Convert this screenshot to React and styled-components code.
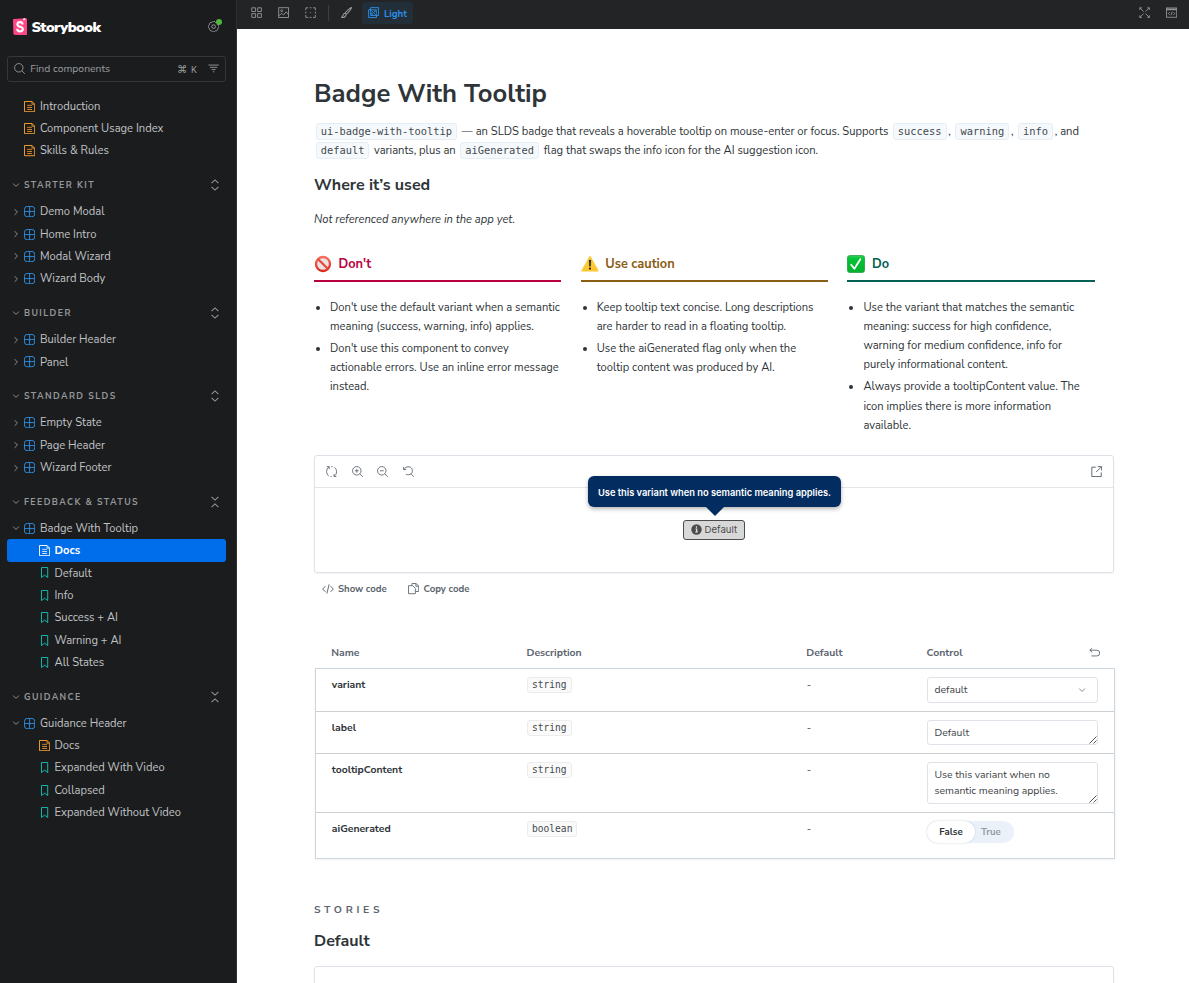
import React from 'react';
import styled, { createGlobalStyle } from 'styled-components';

const SANS = "'Nunito Sans', 'Open Sans', sans-serif";
const MONO = "Menlo, 'DejaVu Sans Mono', monospace";
const UI = "Inter, 'Liberation Sans', sans-serif";

const GlobalStyle = createGlobalStyle`
  *, *::before, *::after { box-sizing: border-box; }
  body {
    margin: 0;
    overflow: hidden;
    font-family: ${SANS};
    font-size: 11.2px;
    color: #2e3438;
    background: #fff;
    -webkit-font-smoothing: antialiased;
  }
  svg { display: block; flex: none; }
`;

/* ---------- icons, all on a 14 unit grid ---------- */

const Svg = ({ size = 11.2, sw = 1.1, children }) => (
  <svg
    width={size}
    height={size}
    viewBox="0 0 14 14"
    fill="none"
    stroke="currentColor"
    strokeWidth={sw}
  >
    {children}
  </svg>
);

const DocumentIcon = () => (
  <Svg sw={1.2}>
    <path d="M4 5.4h6M4 8.1h6M4 10.6h6" strokeWidth="1" />
    <path d="M.6 .6h9.4l3.4 3.4v9.4H.6z" strokeLinejoin="round" />
    <path d="M10 .6v3.4h3.4" strokeWidth="1" />
  </Svg>
);

const ComponentIcon = () => (
  <Svg>
    <rect x=".6" y=".6" width="12.8" height="12.8" rx="3.4" />
    <path d="M7 .6v12.8M.6 7h12.8" />
  </Svg>
);

const BookmarkIcon = () => (
  <Svg sw={1.2}>
    <path d="M3.1 .6h7.8v12.6L7 10.2l-3.9 3z" strokeLinejoin="round" />
  </Svg>
);

const ChevronIcon = ({ open }) => (
  <Svg size={8} sw={1.6}>
    <path d={open ? 'M2 4.5l5 5 5-5' : 'M4.5 2l5 5-5 5'} />
  </Svg>
);

const ExpandAllIcon = () => (
  <Svg size={12} sw={1.2}>
    <path d="M3 4.8L7 1l4 3.8M3 9.2L7 13l4-3.8" />
  </Svg>
);

const CollapseAllIcon = () => (
  <Svg size={12} sw={1.2}>
    <path d="M3 1l4 3.8L11 1M3 13l4-3.8 4 3.8" />
  </Svg>
);

const SearchIcon = () => (
  <Svg>
    <circle cx="6" cy="6" r="5.3" />
    <path d="M9.8 9.8l3.8 3.8" />
  </Svg>
);

const FilterIcon = () => (
  <Svg>
    <path d="M.5 2.6h13M2.5 5.4h9M4.5 8.2h5M6.1 11h1.8" />
  </Svg>
);

const CogIcon = () => (
  <Svg sw={1.2}>
    <circle cx="7" cy="7" r="2.3" />
    <path d="M12.2 4.8a2.4 2.4 0 010 4.4 2.4 2.4 0 01-3 3 2.4 2.4 0 01-4.4 0 2.4 2.4 0 01-3-3 2.4 2.4 0 010-4.4 2.4 2.4 0 013-3 2.4 2.4 0 014.4 0 2.4 2.4 0 013 3z" />
  </Svg>
);

const GridIcon = () => (
  <Svg>
    <path d="M1 1h4.7v4.7H1zM8.3 1H13v4.7H8.3zM1 8.3h4.7V13H1zM8.3 8.3H13V13H8.3z" />
  </Svg>
);

const PhotoIcon = () => (
  <Svg>
    <rect x=".9" y=".9" width="12.2" height="12.2" />
    <circle cx="4.6" cy="4.6" r="1.2" />
    <path d="M1 11l3.5-3L7 10l3-4 3 3.5" />
  </Svg>
);

const OutlineIcon = () => (
  <Svg>
    <path d="M1 4V1h3M10 1h3v3M13 10v3h-3M4 13H1v-3" />
    <path d="M5.8 1h2.4M5.8 13h2.4M1 5.8v2.4M13 5.8v2.4M6.4 7h1.2" />
  </Svg>
);

const BrushIcon = () => (
  <Svg sw={1.3}>
    <path d="M13.2 .8c-1.3 0-6.5 4.3-8.2 7l1.4 1.4C9.1 7.4 13.2 2.1 13.2 .8z" />
    <path d="M5 7.8c-2 .2-2.3 1.5-2.6 3L.8 13.2c2.6 .2 5.3-.6 5.6-4" />
  </Svg>
);

const ThemeIcon = () => (
  <Svg sw={1.2}>
    <path d="M3.4 .8h9.8v9.8H3.4z" />
    <path d="M3.4 3.4H.8v9.8h9.8v-2.6" />
    <path
      d="M3.4 3.4h7.2v7.2M3.6 7l3.6 3.5M3.6 3.6l6.8 6.8M7 3.6l3.5 3.5M10.2 3.7l-6.6 6.6"
      strokeWidth=".9"
    />
  </Svg>
);

const FullscreenIcon = () => (
  <Svg>
    <path d="M1 3.6V1h2.6M10.4 1H13v2.6M13 10.4V13h-2.6M3.6 13H1v-2.6" />
    <path d="M1 1l4.8 4.8M13 1L8.2 5.8M1 13l4.8-4.8M13 13L8.2 8.2" />
  </Svg>
);

const EditorIcon = () => (
  <Svg>
    <rect x=".6" y="1.2" width="12.8" height="11.6" />
    <path d="M.6 3h12.8" strokeWidth="2" />
    <path d="M4.6 6.5L3 8.2l1.6 1.7M9.4 6.5L11 8.2 9.4 9.9M7.7 6l-1.4 4.3" />
  </Svg>
);

const SyncIcon = () => (
  <Svg>
    <path d="M1 .9h3v3M4 .9C-.2 3.7-.2 9.9 3.5 12.5M13 13.1h-3v-3M10 13.1c4.2-2.8 4.2-9 .5-11.6M5.8 13.3h1.5M6.7 .7h1.5" />
  </Svg>
);

const ZoomInIcon = () => (
  <Svg>
    <circle cx="6" cy="6" r="5.3" />
    <path d="M9.8 9.8l3.8 3.8M6 3.6v4.8M3.6 6h4.8" />
  </Svg>
);

const ZoomOutIcon = () => (
  <Svg>
    <circle cx="6" cy="6" r="5.3" />
    <path d="M9.8 9.8l3.8 3.8M3.6 6h4.8" />
  </Svg>
);

const ZoomResetIcon = () => (
  <Svg>
    <path d="M.8 1.2v3.2H4M1.3 4.2C3.5 .3 9-.3 11.2 3.5c2.3 4.7-2.5 9.3-7.7 6.8M10 9.8l3.7 3.8" />
  </Svg>
);

const ShareIcon = () => (
  <Svg sw={1.2}>
    <path d="M6 1.5H1v11.7h11.8V8M8.5 .8h4.8v4.8M13 1L6.5 7.5" />
  </Svg>
);

const MarkupIcon = () => (
  <Svg size={12}>
    <path d="M4 3.6L.8 7 4 10.4M10 3.6L13.2 7 10 10.4M8.3 1.6L5.7 12.4" />
  </Svg>
);

const CopyIcon = () => (
  <Svg>
    <path d="M5 3.2V.6h5.2l3.2 3.2v6.8H9.4M9.9 .6v3.5h3.5" />
    <path d="M.6 3.4h5.4l3.2 3.2v6.8H.6z" />
  </Svg>
);

const UndoIcon = () => (
  <Svg>
    <path d="M4 1.5L1 4l3 2.5M1 4h8.8a3.4 3.4 0 010 7.2H3" />
  </Svg>
);

const StorybookLogo = () => (
  <svg width="14" height="17.5" viewBox="0 0 28 35">
    <path
      d="M1.2 2.1L26.5 .4c.8 0 1.5 .6 1.5 1.5v31.2c0 1-.7 1.7-1.7 1.6L2.5 33.7c-.9 0-1.5-.7-1.6-1.5L0 3.8c0-.9 .4-1.6 1.2-1.7z"
      fill="#ff4785"
    />
    <path d="M20.5 .8l3.8-.3 .2 4.5-1.9-1.3-2.3 1.2z" fill="#fff" />
    <path
      d="M19 13c0-3.4-1.9-4.7-4.8-4.7-3.4 0-5.3 1.7-5.3 4.5 0 6 10.7 3.3 10.7 9.3 0 3-2.2 4.7-5.5 4.7-3.7 0-5.6-1.8-5.4-5.4"
      fill="none"
      stroke="#fff"
      strokeWidth="4.4"
    />
  </svg>
);

const ProhibitedSign = () => (
  <svg width="18" height="18" viewBox="0 0 18 18">
    <defs>
      <linearGradient id="ban" x1="0" y1="0" x2="0" y2="1">
        <stop offset="0" stopColor="#f9705c" />
        <stop offset="1" stopColor="#d92a1c" />
      </linearGradient>
    </defs>
    <circle cx="9" cy="9" r="7" fill="#e9e4e4" stroke="url(#ban)" strokeWidth="2.3" />
    <path d="M4.2 4.2l9.6 9.6" stroke="#e8493a" strokeWidth="2.3" />
  </svg>
);

const WarningSign = () => (
  <svg width="18" height="18" viewBox="0 0 18 18">
    <defs>
      <linearGradient id="warn" x1="0" y1="0" x2="0" y2="1">
        <stop offset="0" stopColor="#ffe04d" />
        <stop offset="1" stopColor="#fcc02c" />
      </linearGradient>
    </defs>
    <path
      d="M9 1.5l8 14.4H1z"
      fill="url(#warn)"
      stroke="#fdc938"
      strokeWidth="1.4"
      strokeLinejoin="round"
    />
    <path d="M8.1 5h1.8l-.3 6.2H8.4z" fill="#2b2410" stroke="#2b2410" strokeWidth=".4" />
    <circle cx="9" cy="13.6" r="1.1" fill="#2b2410" />
  </svg>
);

const CheckSign = () => (
  <svg width="18" height="18" viewBox="0 0 18 18">
    <defs>
      <linearGradient id="check" x1="0" y1="0" x2="0" y2="1">
        <stop offset="0" stopColor="#35cf57" />
        <stop offset=".2" stopColor="#03c335" />
        <stop offset="1" stopColor="#04b12f" />
      </linearGradient>
    </defs>
    <rect
      x=".4"
      y=".4"
      width="17.2"
      height="17.2"
      rx="2.8"
      fill="url(#check)"
      stroke="#219b3f"
      strokeWidth=".8"
    />
    <path
      d="M4.2 9.7l3.2 4L13.3 4.3"
      fill="none"
      stroke="#fff"
      strokeWidth="1.8"
      strokeLinecap="round"
      strokeLinejoin="round"
    />
  </svg>
);

const InfoIcon = () => (
  <svg width="11" height="11" viewBox="0 0 11 11">
    <circle cx="5.5" cy="5.5" r="5.2" fill="#4c4c4c" />
    <path
      d="M5.5 2.2v1.5M4.5 5h1.2v2.7M4.2 8h2.7"
      stroke="#e8e8e8"
      strokeWidth="1.2"
      fill="none"
    />
  </svg>
);

/* ---------- sidebar ---------- */

const Layout = styled.div`
  display: flex;
  width: 1189px;
  height: 983px;
  overflow: hidden;
`;

const Sidebar = styled.nav`
  flex: none;
  width: 237px;
  background: #1b1c1d;
  border-right: 1px solid #2f3032;
  color: #c0c3c6;
`;

const Brand = styled.header`
  display: flex;
  align-items: center;
  height: 56px;
  padding: 0 17px 3px 13px;
  gap: 4.5px;
  color: #fff;
  font-size: 14.6px;
  font-weight: 900;
  letter-spacing: -0.57px;
`;

const BrandName = styled.span`
  flex: 1;
`;

const Settings = styled.span`
  position: relative;
  color: #96999c;
`;

const StatusDot = styled.i`
  position: absolute;
  top: -2px;
  right: -3px;
  width: 6px;
  height: 6px;
  border-radius: 50%;
  background: #4fb83d;
`;

const SearchBox = styled.div`
  display: flex;
  align-items: center;
  width: 219px;
  height: 26px;
  margin: 0 0 12.8px 7px;
  padding: 0 6px;
  border: 1px solid #363739;
  border-radius: 3px;
  color: #9a9da0;
`;

const SearchText = styled.span`
  flex: 1;
  margin: -1px 0 0 5px;
  font-size: 10.4px;
`;

const Shortcut = styled.span`
  display: flex;
  align-items: center;
  gap: 3.5px;
  margin-right: 11px;
  font-family: 'DejaVu Sans', sans-serif;
  font-size: 10.4px;
`;

const ShortcutKey = styled.kbd`
  font-family: ${UI};
  font-size: 8.8px;
`;

const SectionHead = styled.div`
  display: flex;
  align-items: center;
  height: 38.5px;
  padding: 8.3px 15px 0 12px;
  color: #95989b;
`;

const SectionTitle = styled.span`
  flex: 1;
  margin-left: 4px;
  font-size: 8.8px;
  font-weight: 700;
  letter-spacing: 1.41px;
  text-transform: uppercase;
`;

const Item = styled.div`
  display: flex;
  align-items: center;
  height: 22.35px;
  width: 219px;
  margin-left: 7px;
  padding: 0.6px 0 0 ${({ $depth }) => ($depth === 2 ? 32 : 5)}px;
  border-radius: 3px;
  background: ${({ $active }) => ($active ? '#006deb' : 'transparent')};
  color: ${({ $active }) => ($active ? '#fff' : 'inherit')};
  font-weight: ${({ $active }) => ($active ? 700 : 400)};
`;

const Caret = styled.span`
  width: 12px;
  color: #95989b;
`;

const iconColors = { document: '#fca130', component: '#2f96f3', story: '#14bdb4' };

const ItemIcon = styled.span`
  margin-right: ${({ $depth }) => ($depth === 2 ? 4.3 : 4.8)}px;
  color: ${({ $kind, $active }) => ($active ? '#fff' : iconColors[$kind])};
`;

const kinds = {
  document: DocumentIcon,
  component: ComponentIcon,
  story: BookmarkIcon,
};

const TreeItem = ({ name, kind, depth = 1, open, active }) => {
  const Icon = kinds[kind];
  return (
    <Item $depth={depth} $active={active}>
      {depth === 1 && <Caret>{kind === 'component' && <ChevronIcon open={open} />}</Caret>}
      <ItemIcon $kind={kind} $depth={depth} $active={active}>
        <Icon />
      </ItemIcon>
      {name}
    </Item>
  );
};

const component = (name, open) => ({ name, kind: 'component', open });
const doc = (name, depth, active) => ({ name, kind: 'document', depth, active });
const story = (name) => ({ name, kind: 'story', depth: 2 });

const sections = [
  {
    title: 'Starter Kit',
    items: ['Demo Modal', 'Home Intro', 'Modal Wizard', 'Wizard Body'].map((n) => component(n)),
  },
  { title: 'Builder', items: ['Builder Header', 'Panel'].map((n) => component(n)) },
  {
    title: 'Standard SLDS',
    items: ['Empty State', 'Page Header', 'Wizard Footer'].map((n) => component(n)),
  },
  {
    title: 'Feedback & Status',
    expanded: true,
    items: [
      component('Badge With Tooltip', true),
      doc('Docs', 2, true),
      ...['Default', 'Info', 'Success + AI', 'Warning + AI', 'All States'].map(story),
    ],
  },
  {
    title: 'Guidance',
    expanded: true,
    items: [
      component('Guidance Header', true),
      doc('Docs', 2),
      ...['Expanded With Video', 'Collapsed', 'Expanded Without Video'].map(story),
    ],
  },
];

const SidebarPanel = () => (
  <Sidebar>
    <Brand>
      <StorybookLogo />
      <BrandName>Storybook</BrandName>
      <Settings>
        <CogIcon />
        <StatusDot />
      </Settings>
    </Brand>
    <SearchBox>
      <SearchIcon />
      <SearchText>Find components</SearchText>
      <Shortcut>
        ⌘<ShortcutKey>K</ShortcutKey>
      </Shortcut>
      <FilterIcon />
    </SearchBox>
    {['Introduction', 'Component Usage Index', 'Skills & Rules'].map((name) => (
      <TreeItem key={name} name={name} kind="document" />
    ))}
    {sections.map(({ title, expanded, items }) => (
      <React.Fragment key={title}>
        <SectionHead>
          <ChevronIcon open />
          <SectionTitle>{title}</SectionTitle>
          {expanded ? <CollapseAllIcon /> : <ExpandAllIcon />}
        </SectionHead>
        {items.map((item) => (
          <TreeItem key={item.name} {...item} />
        ))}
      </React.Fragment>
    ))}
  </Sidebar>
);

/* ---------- toolbar ---------- */

const Main = styled.main`
  flex: 1;
  min-width: 0;
`;

const Toolbar = styled.div`
  display: flex;
  align-items: center;
  height: 29px;
  padding: 0 12px 3px 14px;
  gap: 15.8px;
  background: #222425;
  color: #95989b;
`;

const Divider = styled.i`
  width: 1px;
  height: 16px;
  margin: 0 -4px;
  background: #3d3f41;
`;

const ThemeButton = styled.span`
  display: flex;
  align-items: center;
  gap: 5px;
  height: 22px;
  margin-left: -6px;
  padding: 0 6px;
  border-radius: 3px;
  background: #222e38;
  color: #2b8fe8;
  font-size: 9.6px;
  font-weight: 700;
`;

const Spacer = styled.span`
  flex: 1;
`;

/* ---------- docs page ---------- */

const Page = styled.article`
  width: 801px;
  margin-left: 77px;
  padding-top: 49px;
`;

const Title = styled.h1`
  margin: 0 0 12px;
  font-size: 25.6px;
  line-height: 32px;
  font-weight: 700;
  white-space: nowrap;
`;

const Lead = styled.p`
  margin: 0;
  line-height: 19.13px;
  letter-spacing: -0.008px;
  white-space: nowrap;
`;

const Code = styled.code`
  display: inline-block;
  margin: 0 1.7px;
  padding: 0 4px;
  border: 1px solid #e6eef5;
  border-radius: 3px;
  background: #f6f9fc;
  color: #43494e;
  font-family: ${MONO};
  font-size: 10.4px;
  line-height: 15px;
  letter-spacing: 0;
`;

const Heading = styled.h2`
  margin: ${({ $top }) => $top}px 0 0;
  font-size: 16px;
  line-height: 24px;
  font-weight: 700;
`;

const Note = styled.p`
  margin: 13px 0 23px;
  line-height: 19px;
  font-style: italic;
`;

const Guidelines = styled.div`
  display: grid;
  grid-template-columns: repeat(3, 247.2px);
  gap: 19.5px;
  height: 203px;
`;

const GuideHead = styled.h3`
  display: flex;
  align-items: center;
  gap: 6.5px;
  height: 30px;
  margin: 0;
  padding-bottom: 4px;
  border-bottom: 2px solid ${({ $color }) => $color};
  color: ${({ $color }) => $color};
  font-size: 12.8px;
  font-weight: 700;
`;

const GuideList = styled.ul`
  margin: 16px 0 0;
  padding-left: 16px;
  line-height: 19.12px;
  white-space: pre;

  li + li {
    margin-top: 3px;
  }
`;

const guides = [
  {
    title: "Don't",
    color: '#ba0040',
    Icon: ProhibitedSign,
    items: [
      "Don't use the default variant when a semantic\nmeaning (success, warning, info) applies.",
      "Don't use this component to convey\nactionable errors. Use an inline error message\ninstead.",
    ],
  },
  {
    title: 'Use caution',
    color: '#8c5d15',
    Icon: WarningSign,
    items: [
      'Keep tooltip text concise. Long descriptions\nare harder to read in a floating tooltip.',
      'Use the aiGenerated flag only when the\ntooltip content was produced by AI.',
    ],
  },
  {
    title: 'Do',
    color: '#056053',
    Icon: CheckSign,
    items: [
      'Use the variant that matches the semantic\nmeaning: success for high confidence,\nwarning for medium confidence, info for\npurely informational content.',
      'Always provide a tooltipContent value. The\nicon implies there is more information\navailable.',
    ],
  },
];

const Preview = styled.section`
  width: 800px;
  height: ${({ $height }) => $height}px;
  margin-top: ${({ $top = 0 }) => $top}px;
  border: 1px solid #dce2e8;
  border-radius: 3px;
  box-shadow: 0 1px 2px rgba(0, 0, 0, 0.06);
`;

const PreviewBar = styled.div`
  display: flex;
  align-items: center;
  gap: 14.5px;
  height: 32px;
  padding: 0 11px;
  border-bottom: 1px solid #e3e6e9;
  color: #5c6570;
`;

const Stage = styled.div`
  display: flex;
  justify-content: center;
  padding-top: 32px;
`;

const Badge = styled.span`
  position: relative;
  display: flex;
  align-items: center;
  gap: 2.5px;
  width: 62px;
  height: 20px;
  padding-left: 7px;
  border: 1px solid #4b4b4b;
  border-radius: 3px;
  background: #d8d8d8;
  color: #4c4c4c;
  font-family: ${UI};
  font-size: 9.6px;
`;

const Tooltip = styled.span`
  position: absolute;
  left: 50%;
  bottom: 32px;
  width: 253px;
  height: 31px;
  padding-top: 1px;
  margin-left: -126px;
  border-radius: 6px;
  background: #032d60;
  box-shadow: 0 2px 4px rgba(0, 0, 0, 0.3);
  color: #fff;
  font-size: 9.3px;
  font-weight: 600;
  line-height: 31px;
  text-align: center;
  white-space: nowrap;

  &::after {
    content: '';
    position: absolute;
    left: 50%;
    top: 100%;
    margin-left: -9px;
    border: 9px solid transparent;
    border-top-color: #032d60;
    border-bottom: 0;
  }
`;

const CodeActions = styled.div`
  display: flex;
  gap: 21px;
  height: 32px;
  padding-left: 7.5px;
  color: #5c6570;
  font-size: 9.6px;
  font-weight: 700;
`;

const CodeAction = styled.span`
  display: flex;
  align-items: center;
  gap: 4.5px;
`;

const ArgsGrid = styled.div`
  display: grid;
  grid-template-columns: 195.2px 279.8px 120.2px 1fr;
  padding: 0 15.8px;
`;

const ArgsHead = styled(ArgsGrid)`
  align-items: center;
  height: 31px;
  margin-top: 32px;
  padding: 0 15px 0 17.3px;
  color: #5c6570;
  font-size: 10.4px;
  font-weight: 700;
`;

const HeadCell = styled.span`
  display: flex;
  align-items: center;
  justify-content: space-between;
`;

const ArgsBody = styled.div`
  width: 800px;
  margin-left: 1px;
  border: 1px solid #ccd6df;
  box-shadow: 0 1px 3px rgba(0, 0, 0, 0.06);
`;

const ArgsRow = styled(ArgsGrid)`
  height: ${({ $height }) => $height}px;
  padding-top: 8px;
  font-size: 10.4px;
  line-height: 16px;

  & + & {
    border-top: 1px solid #cbd0d5;
  }
`;

const ArgName = styled.b`
  font-weight: 700;
`;

const TypeCode = styled.code`
  display: inline-block;
  padding: 0 4px;
  border: 1px solid #ececed;
  border-radius: 3px;
  background: #fafafb;
  color: #43494e;
  font-family: ${MONO};
  font-size: 9.6px;
  line-height: 14px;
`;

const Field = styled.div`
  position: relative;
  width: 171px;
  height: ${({ $height }) => $height}px;
  padding: 4px 6.5px 0;
  border: 1px solid #dde3e8;
  border-radius: 3px;
  color: #3d4347;
  white-space: pre;
`;

const SelectField = styled(Field)`
  display: flex;
  justify-content: space-between;
  padding-right: 11px;

  svg {
    margin-top: 4px;
    color: #79828c;
  }
`;

const Grip = styled.span`
  position: absolute;
  right: 0;
  bottom: 0;
  color: #555;
`;

const Resizer = () => (
  <Grip>
    <svg width="8" height="8" viewBox="0 0 8 8" stroke="currentColor">
      <path d="M.5 7.5l7-7M4.5 7.5l3-3" />
    </svg>
  </Grip>
);

const Toggle = styled.div`
  display: flex;
  width: 87px;
  height: 22px;
  border-radius: 11px;
  background: #eaf1f9;
  font-size: 9.6px;
  line-height: 22px;
  font-weight: 700;
`;

const ToggleOption = styled.span`
  width: ${({ $on }) => ($on ? 48 : 32)}px;
  border-radius: 11px;
  background: ${({ $on }) => ($on ? '#fff' : 'transparent')};
  box-shadow: ${({ $on }) => ($on ? '0 0 2px #b9c9d8' : 'none')};
  color: ${({ $on }) => ($on ? '#2e3438' : '#959ca4')};
  text-align: center;
`;

const StoriesLabel = styled.h2`
  margin: 41px 0 0;
  color: #5c6570;
  font-size: 10.4px;
  line-height: 20px;
  font-weight: 700;
  letter-spacing: 3.7px;
`;

const args = [
  {
    name: 'variant',
    type: 'string',
    height: 42,
    control: (
      <SelectField $height={26}>
        default
        <ChevronIcon open />
      </SelectField>
    ),
  },
  {
    name: 'label',
    type: 'string',
    height: 42,
    control: (
      <Field $height={25}>
        Default
        <Resizer />
      </Field>
    ),
  },
  {
    name: 'tooltipContent',
    type: 'string',
    height: 59,
    control: (
      <Field $height={42}>
        {'Use this variant when no\nsemantic meaning applies.'}
        <Resizer />
      </Field>
    ),
  },
  {
    name: 'aiGenerated',
    type: 'boolean',
    height: 46,
    control: (
      <Toggle>
        <ToggleOption $on>False</ToggleOption>
        <ToggleOption>True</ToggleOption>
      </Toggle>
    ),
  },
];

const App = () => (
  <Layout>
    <GlobalStyle />
    <SidebarPanel />
    <Main>
      <Toolbar>
        <GridIcon />
        <PhotoIcon />
        <OutlineIcon />
        <Divider />
        <BrushIcon />
        <ThemeButton>
          <ThemeIcon />
          Light
        </ThemeButton>
        <Spacer />
        <FullscreenIcon />
        <EditorIcon />
      </Toolbar>
      <Page>
        <Title>Badge With Tooltip</Title>
        <Lead>
          <Code>ui-badge-with-tooltip</Code> — an SLDS badge that reveals a hoverable tooltip on
          mouse-enter or focus. Supports <Code>success</Code>, <Code>warning</Code>,{' '}
          <Code>info</Code>, and
          <br />
          <Code>default</Code> variants, plus an <Code>aiGenerated</Code> flag that swaps the info
          icon for the AI suggestion icon.
        </Lead>
        <Heading $top={12.7}>Where it’s used</Heading>
        <Note>Not referenced anywhere in the app yet.</Note>
        <Guidelines>
          {guides.map(({ title, color, Icon, items }) => (
            <div key={title}>
              <GuideHead $color={color}>
                <Icon />
                {title}
              </GuideHead>
              <GuideList>
                {items.map((item) => (
                  <li key={item}>{item}</li>
                ))}
              </GuideList>
            </div>
          ))}
        </Guidelines>
        <Preview $height={118}>
          <PreviewBar>
            <SyncIcon />
            <ZoomInIcon />
            <ZoomOutIcon />
            <ZoomResetIcon />
            <Spacer />
            <ShareIcon />
          </PreviewBar>
          <Stage>
            <Badge>
              <InfoIcon />
              Default
              <Tooltip>Use this variant when no semantic meaning applies.</Tooltip>
            </Badge>
          </Stage>
        </Preview>
        <CodeActions>
          <CodeAction>
            <MarkupIcon />
            Show code
          </CodeAction>
          <CodeAction>
            <CopyIcon />
            Copy code
          </CodeAction>
        </CodeActions>
        <ArgsHead>
          <span>Name</span>
          <span>Description</span>
          <span>Default</span>
          <HeadCell>
            Control
            <UndoIcon />
          </HeadCell>
        </ArgsHead>
        <ArgsBody>
          {args.map(({ name, type, height, control }) => (
            <ArgsRow key={name} $height={height}>
              <ArgName>{name}</ArgName>
              <span>
                <TypeCode>{type}</TypeCode>
              </span>
              <span>-</span>
              {control}
            </ArgsRow>
          ))}
        </ArgsBody>
        <StoriesLabel>STORIES</StoriesLabel>
        <Heading $top={9}>Default</Heading>
        <Preview $height={60} $top={13} />
      </Page>
    </Main>
  </Layout>
);

export default App;
